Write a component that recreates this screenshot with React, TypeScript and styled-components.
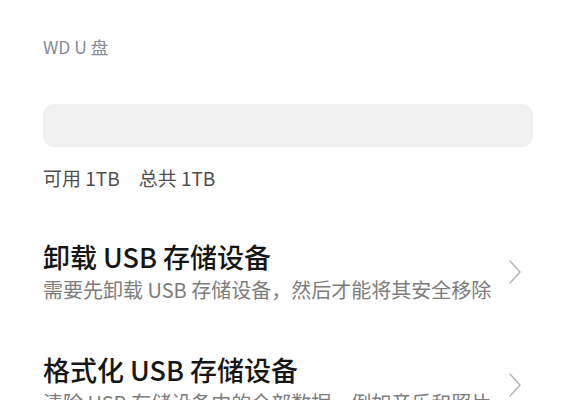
import React from 'react';
import styled, { createGlobalStyle } from 'styled-components';

const GlobalStyle = createGlobalStyle`
  html, body {
    margin: 0;
    padding: 0;
    background: #ffffff;
  }
  body {
    font-family: "Noto Sans CJK SC", "Noto Sans", sans-serif;
    -webkit-font-smoothing: antialiased;
  }
`;

interface StorageAction {
  id: string;
  title: string;
  description: string;
}

const actions: StorageAction[] = [
  {
    id: 'unmount',
    title: '卸载 USB 存储设备',
    description: '需要先卸载 USB 存储设备，然后才能将其安全移除',
  },
  {
    id: 'format',
    title: '格式化 USB 存储设备',
    description: '清除 USB 存储设备中的全部数据，例如音乐和照片',
  },
];

const Page = styled.div`
  width: 576px;
  height: 400px;
  overflow: hidden;
  box-sizing: border-box;
  padding: 36px 43px 0;
`;

const DeviceLabel = styled.div`
  font-size: 17.5px;
  line-height: 22px;
  color: #878d98;
`;

const UsageBar = styled.div`
  margin-top: 46px;
  height: 43px;
  border-radius: 11px;
  background: #f0f0f0;
`;

const Capacity = styled.div`
  margin-top: 17px;
  display: flex;
  gap: 19px;
  font-size: 19px;
  line-height: 28px;
  color: #4f4f4f;
`;

const ActionRow = styled.div`
  margin-top: 47px;
  display: flex;
  align-items: center;
  padding-right: 12px;
  cursor: pointer;
`;

const ActionText = styled.div`
  flex: 1;
  min-width: 0;
`;

const ActionTitle = styled.div`
  font-size: 27px;
  line-height: 35px;
  font-weight: 500;
  color: #161616;
`;

const ActionDesc = styled.div`
  font-size: 20px;
  line-height: 31px;
  color: #7d7d7d;
  white-space: nowrap;
`;

const Chevron = styled.svg`
  flex: none;
  width: 12px;
  height: 24px;
`;

export default function App() {
  return (
    <>
      <GlobalStyle />
      <Page>
        <DeviceLabel>WD U 盘</DeviceLabel>
        <UsageBar />
        <Capacity>
          <span>可用 1TB</span>
          <span>总共 1TB</span>
        </Capacity>
        {actions.map((a) => (
          <ActionRow key={a.id}>
            <ActionText>
              <ActionTitle>{a.title}</ActionTitle>
              <ActionDesc>{a.description}</ActionDesc>
            </ActionText>
            <Chevron viewBox="0 0 12 24">
              <polyline
                points="1,1 11,12 1,23"
                fill="none"
                stroke="#b4b4b4"
                strokeWidth="1.4"
                strokeLinecap="round"
                strokeLinejoin="round"
              />
            </Chevron>
          </ActionRow>
        ))}
      </Page>
    </>
  );
}
